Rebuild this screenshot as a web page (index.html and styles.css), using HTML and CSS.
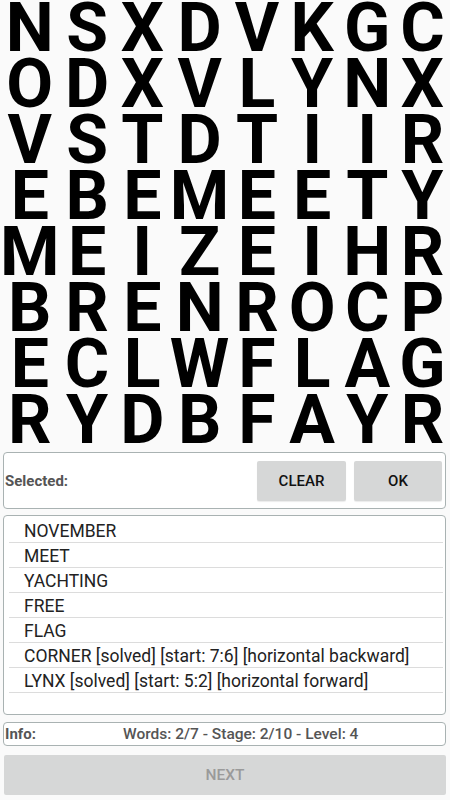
FILE: index.html
```html
<!DOCTYPE html>
<html>
<head>
<meta charset="utf-8">
<link rel="stylesheet" href="styles.css">
</head>
<body>
<div class="grid">
<span>N</span><span>S</span><span>X</span><span>D</span><span>V</span><span>K</span><span>G</span><span>C</span>
<span>O</span><span>D</span><span>X</span><span>V</span><span>L</span><span>Y</span><span>N</span><span>X</span>
<span>V</span><span>S</span><span>T</span><span>D</span><span>T</span><span>I</span><span>I</span><span>R</span>
<span>E</span><span>B</span><span>E</span><span>M</span><span>E</span><span>E</span><span>T</span><span>Y</span>
<span>M</span><span>E</span><span>I</span><span>Z</span><span>E</span><span>I</span><span>H</span><span>R</span>
<span>B</span><span>R</span><span>E</span><span>N</span><span>R</span><span>O</span><span>C</span><span>P</span>
<span>E</span><span>C</span><span>L</span><span>W</span><span>F</span><span>L</span><span>A</span><span>G</span>
<span>R</span><span>Y</span><span>D</span><span>B</span><span>F</span><span>A</span><span>Y</span><span>R</span>
</div>
<div class="panel selected">
  <span class="label">Selected:</span>
  <div class="btns">
    <button class="btn">CLEAR</button>
    <button class="btn">OK</button>
  </div>
</div>
<div class="panel words">
  <div class="word">NOVEMBER</div>
  <div class="word">MEET</div>
  <div class="word">YACHTING</div>
  <div class="word">FREE</div>
  <div class="word">FLAG</div>
  <div class="word">CORNER [solved] [start: 7:6] [horizontal backward]</div>
  <div class="word">LYNX [solved] [start: 5:2] [horizontal forward]</div>
</div>
<div class="panel info">
  <span class="label">Info:</span>
  <span class="info-text">Words: 2/7 - Stage: 2/10 - Level: 4</span>
</div>
<button class="next">NEXT</button>
</body>
</html>
```
FILE: styles.css
```css
html, body {
  margin: 0;
  padding: 0;
  background: #fafafa;
  font-family: Roboto, "Noto Sans", sans-serif;
}
body {
  width: 450px;
  height: 800px;
  overflow: hidden;
}
.grid {
  display: grid;
  grid-template-columns: repeat(8, 1fr);
  grid-auto-rows: 56px;
  height: 448px;
  overflow: hidden;
}
.grid span {
  font-size: 68px;
  font-weight: 700;
  line-height: 56px;
  text-align: center;
  color: #000;
}
.panel {
  border: 1px solid #a9b2b2;
  border-radius: 4px;
  background: #fff;
  box-sizing: border-box;
  margin: 0 4px 0 3px;
}
.label {
  font-size: 15px;
  font-weight: 700;
  color: #555;
}
.selected {
  margin-top: 4px;
  height: 57px;
  display: flex;
  align-items: center;
  justify-content: space-between;
  padding: 0 3px 0 1px;
}
.btns {
  display: flex;
  gap: 8px;
}
.btn {
  border: none;
  border-radius: 2px;
  background: #d6d7d7;
  font-family: Roboto, sans-serif;
  font-size: 15px;
  font-weight: 500;
  color: #111;
  height: 40px;
  padding: 0;
  box-shadow: 0 1px 1px rgba(0,0,0,0.08);
}
.btn:first-child { width: 89px; }
.btn:last-child { width: 88px; }
.words {
  margin-top: 6px;
  height: 200px;
  padding: 2px 2px 0 5px;
}
.word {
  height: 24px;
  border-bottom: 1px solid #dcdcdc;
  font-size: 17.5px;
  line-height: 27px;
  color: #222;
  padding-left: 15px;
  overflow: visible;
}
.info {
  margin-top: 7px;
  height: 24px;
  display: flex;
  align-items: center;
  padding-left: 1px;
}
.info .label {
  width: 118px;
}
.info-text {
  font-size: 15.5px;
  font-weight: 500;
  color: #555;
}
.next {
  display: block;
  margin: 9px 4px 0 4px;
  width: 442px;
  height: 40px;
  border: none;
  border-radius: 2px;
  background: #d6d7d7;
  font-family: Roboto, sans-serif;
  font-size: 15.5px;
  font-weight: 500;
  color: #9a9a9a;
}
```
